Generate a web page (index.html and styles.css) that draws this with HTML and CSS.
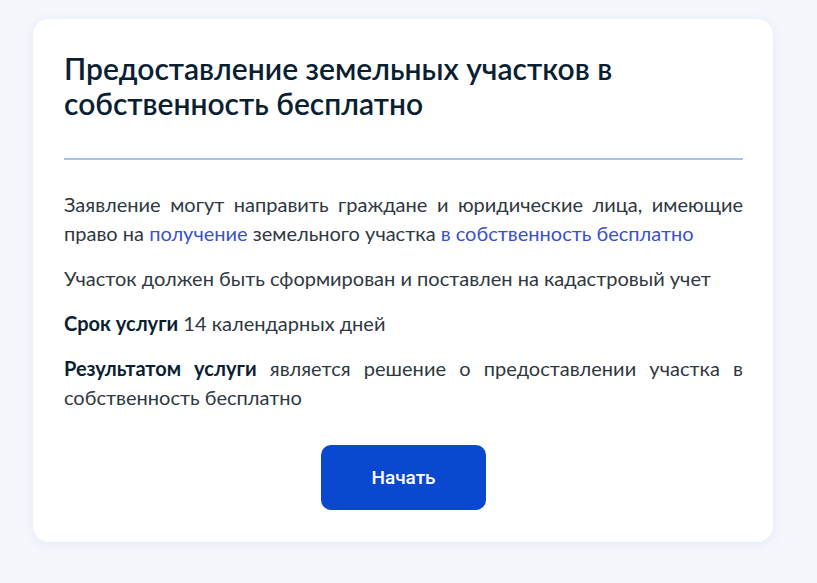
FILE: index.html
```html
<!DOCTYPE html>
<html lang="ru">
<head>
<meta charset="utf-8">
<link rel="stylesheet" href="styles.css">
</head>
<body>
<main class="page">
  <section class="card">
    <h1 class="title">Предоставление земельных участков в собственность бесплатно</h1>
    <hr class="divider">
    <p class="text">Заявление могут направить граждане и юридические лица, имеющие право на <a class="link" href="#">получение</a> земельного участка <a class="link" href="#">в собственность бесплатно</a></p>
    <p class="text">Участок должен быть сформирован и поставлен на кадастровый учет</p>
    <p class="text"><b class="strong">Срок услуги</b> 14 календарных дней</p>
    <p class="text"><b class="strong">Результатом услуги</b> является решение о предоставлении участка в собственность бесплатно</p>
    <div class="actions"><button class="btn" type="button">Начать</button></div>
  </section>
</main>
</body>
</html>
```
FILE: styles.css
```css
html, body {
  margin: 0;
  padding: 0;
}
body {
  background: #f5f7fc;
  font-family: Lato, "Noto Sans", sans-serif;
  width: 817px;
  height: 583px;
  overflow: hidden;
}
.page {
  padding: 19px 44px 0 33px;
}
.card {
  width: 740px;
  box-sizing: border-box;
  background: #fff;
  border-radius: 16px;
  padding: 32px 30px 32px 31px;
  box-shadow: 0 2px 12px rgba(180, 195, 230, 0.25);
}
.title {
  margin: 0;
  font-size: 30px;
  line-height: 35px;
  font-weight: 600;
  color: #0b1f33;
  max-width: 620px;
}
.divider {
  border: none;
  height: 2px;
  background: #a9c1f2;
  margin: 37px 0 30px;
}
.text {
  margin: 0 0 16px;
  font-size: 20px;
  line-height: 29px;
  color: #2f3742;
  text-align: justify;
}
.strong {
  font-weight: 700;
  color: #0b1f33;
}
.link {
  color: #3b4fcf;
  text-decoration: none;
}
.actions {
  display: flex;
  justify-content: center;
  margin-top: 33px;
}
.btn {
  width: 165px;
  height: 65px;
  border: none;
  border-radius: 10px;
  background: #0b48d0;
  color: #fff;
  font-family: Roboto, Arial, sans-serif;
  font-size: 19px;
  font-weight: 500;
}
```
